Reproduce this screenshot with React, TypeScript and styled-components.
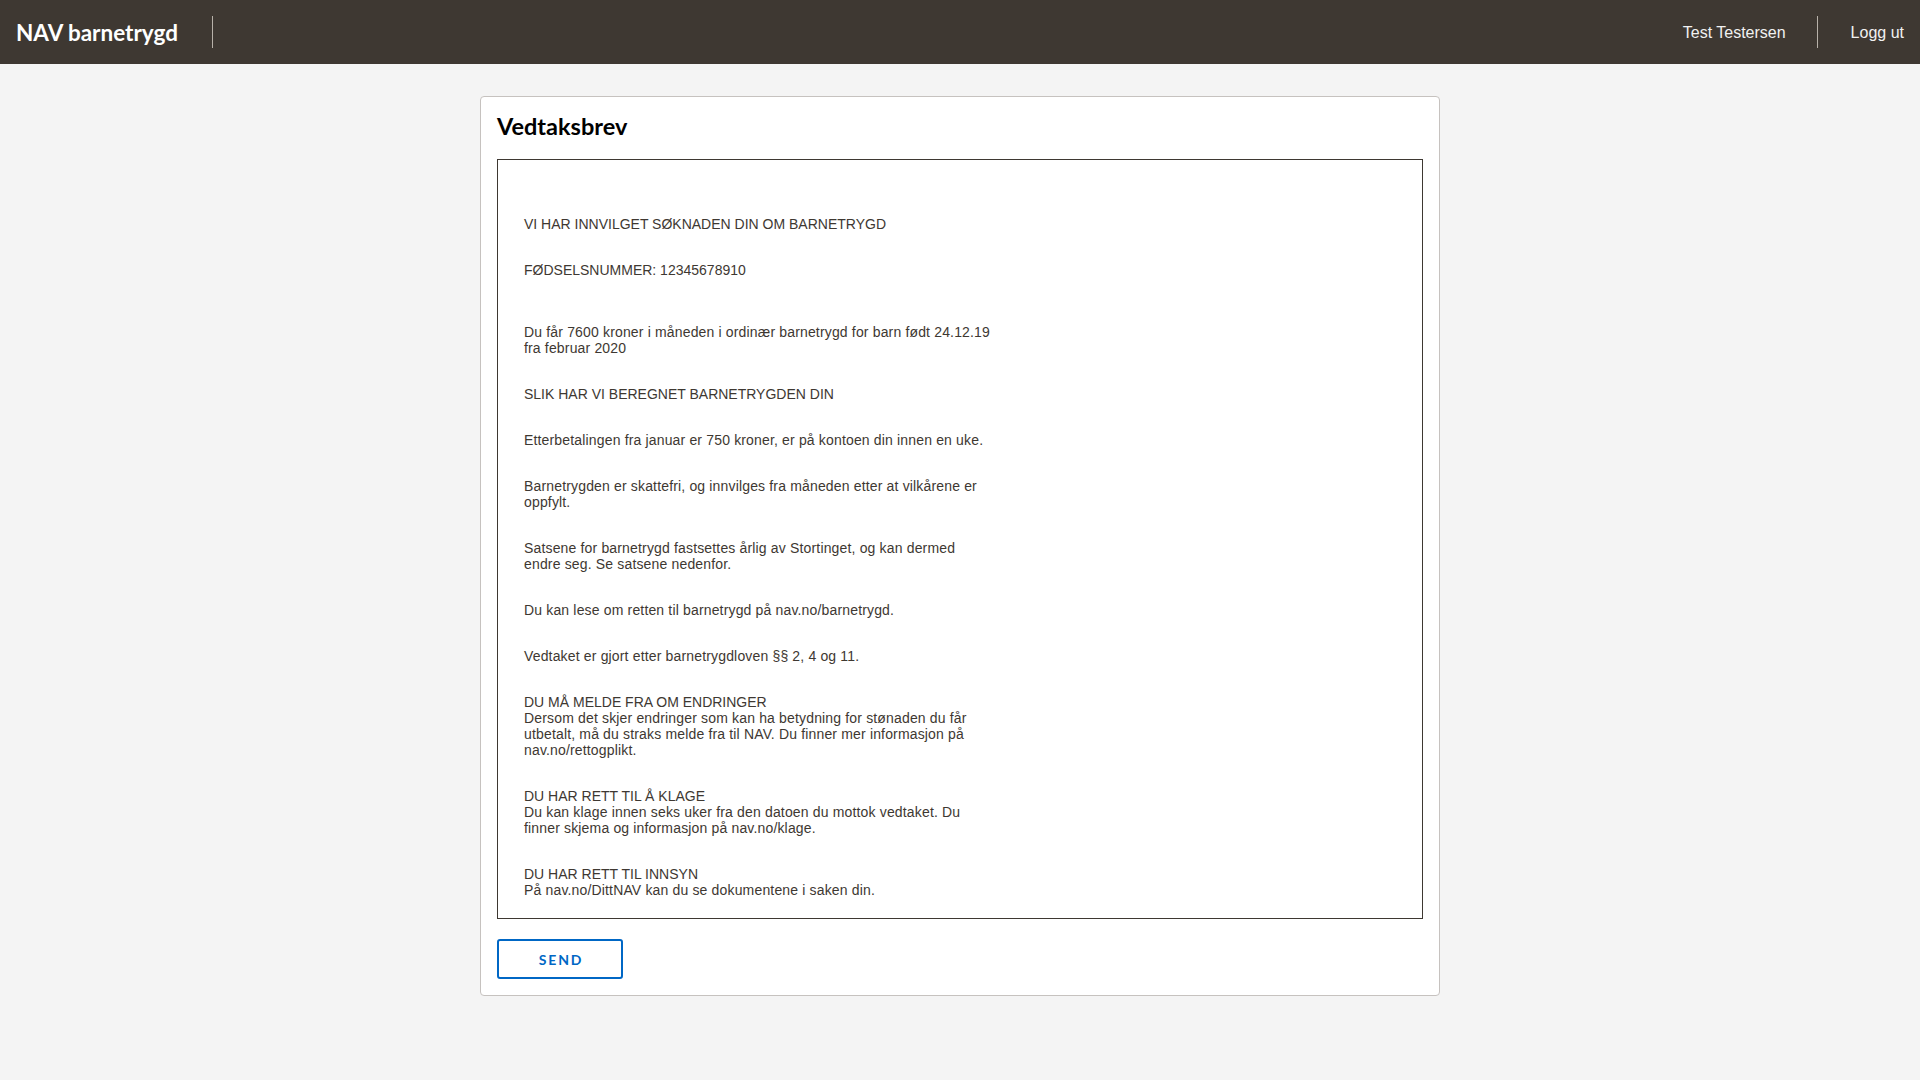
import React from "react";
import styled, { createGlobalStyle } from "styled-components";

const GlobalStyle = createGlobalStyle`
  html, body { margin: 0; padding: 0; }
  body {
    background: #f4f4f4;
    font-family: "Liberation Sans", Arial, sans-serif;
    color: #3e3832;
  }
`;

const Header = styled.header`
  display: flex;
  align-items: center;
  height: 64px;
  background: #3e3832;
`;

const Brand = styled.div`
  font-family: Lato, "Noto Sans", sans-serif;
  font-weight: 700;
  font-size: 22.5px;
  color: #ffffff;
  padding: 0 34px 0 16px;
`;

const Divider = styled.span`
  width: 1px;
  height: 32px;
  background: #b7b1a9;
`;

const RightGroup = styled.nav`
  display: flex;
  align-items: center;
  margin-left: auto;
`;

const HeaderItem = styled.span<{ $last?: boolean }>`
  font-family: "Liberation Sans", Arial, sans-serif;
  font-size: 16px;
  color: #f1f1f1;
  margin-top: 2px;
  padding: ${(p) => (p.$last ? "0 16px 0 33px" : "0 31px 0 33px")};
`;

const Main = styled.main`
  display: flex;
  justify-content: center;
  padding: 32px 0;
`;

const Card = styled.section`
  width: 960px;
  box-sizing: border-box;
  background: #ffffff;
  border: 1px solid #c6c2bf;
  border-radius: 4px;
  padding: 15px 16px 16px;
  display: flex;
  flex-direction: column;
  align-items: flex-start;
`;

const Title = styled.h1`
  font-family: Lato, "Noto Sans", sans-serif;
  font-weight: 700;
  font-size: 23.5px;
  line-height: 29px;
  color: #000;
  margin: 0 0 18px;
`;

const Letter = styled.div`
  align-self: stretch;
  border: 1px solid #3e3832;
  padding: 56px 26px 20px;
  display: flex;
  flex-direction: column;
  gap: 30px;
`;

const Para = styled.p<{ $spaced?: boolean }>`
  margin: 0;
  max-width: 468px;
  font-family: "Liberation Sans", Arial, sans-serif;
  font-size: 14px;
  line-height: 16px;
  letter-spacing: 0.16px;
  color: #3e3832;
  margin-bottom: ${(p) => (p.$spaced ? "16px" : "0")};
`;

const Caps = styled.span`
  letter-spacing: 0;
`;

const SendButton = styled.button`
  margin-top: 20px;
  width: 126px;
  height: 40px;
  border: 2px solid #0067c5;
  border-radius: 3px;
  background: #ffffff;
  color: #0067c5;
  font-family: Lato, "Noto Sans", sans-serif;
  font-weight: 700;
  font-size: 14px;
  letter-spacing: 1.8px;
  text-transform: uppercase;
  cursor: pointer;
  padding: 0 0 0 2px;
`;

type P = { heading?: string; text?: string; spaced?: boolean };

const paragraphs: P[] = [
  { heading: "VI HAR INNVILGET SØKNADEN DIN OM BARNETRYGD" },
  { heading: "FØDSELSNUMMER: 12345678910", spaced: true },
  { text: "Du får 7600 kroner i måneden i ordinær barnetrygd for barn født 24.12.19 fra februar 2020" },
  { heading: "SLIK HAR VI BEREGNET BARNETRYGDEN DIN" },
  { text: "Etterbetalingen fra januar er 750 kroner, er på kontoen din innen en uke." },
  { text: "Barnetrygden er skattefri, og innvilges fra måneden etter at vilkårene er oppfylt." },
  { text: "Satsene for barnetrygd fastsettes årlig av Stortinget, og kan dermed endre seg. Se satsene nedenfor." },
  { text: "Du kan lese om retten til barnetrygd på nav.no/barnetrygd." },
  { text: "Vedtaket er gjort etter barnetrygdloven §§ 2, 4 og 11." },
  {
    heading: "DU MÅ MELDE FRA OM ENDRINGER",
    text: "Dersom det skjer endringer som kan ha betydning for stønaden du får utbetalt, må du straks melde fra til NAV. Du finner mer informasjon på nav.no/rettogplikt.",
  },
  {
    heading: "DU HAR RETT TIL Å KLAGE",
    text: "Du kan klage innen seks uker fra den datoen du mottok vedtaket. Du finner skjema og informasjon på nav.no/klage.",
  },
  {
    heading: "DU HAR RETT TIL INNSYN",
    text: "På nav.no/DittNAV kan du se dokumentene i saken din.",
  },
];

export default function App() {
  return (
    <>
      <GlobalStyle />
      <Header>
        <Brand>NAV barnetrygd</Brand>
        <Divider />
        <RightGroup>
          <HeaderItem>Test Testersen</HeaderItem>
          <Divider />
          <HeaderItem $last>Logg ut</HeaderItem>
        </RightGroup>
      </Header>
      <Main>
        <Card>
          <Title>Vedtaksbrev</Title>
          <Letter>
            {paragraphs.map((p, i) => (
              <Para key={i} $spaced={p.spaced}>
                {p.heading && <Caps>{p.heading}</Caps>}
                {p.heading && p.text && <br />}
                {p.text}
              </Para>
            ))}
          </Letter>
          <SendButton>Send</SendButton>
        </Card>
      </Main>
    </>
  );
}
